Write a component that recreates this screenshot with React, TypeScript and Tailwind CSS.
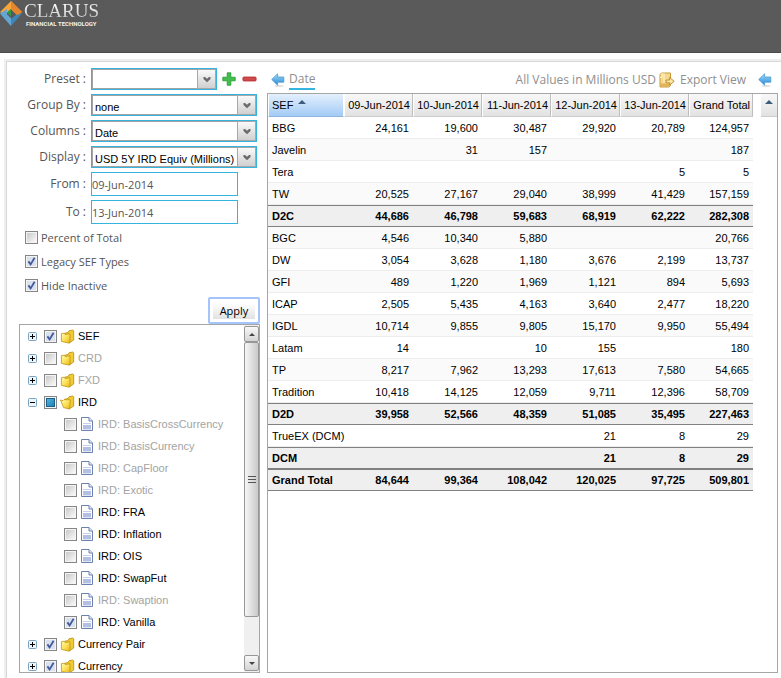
import { useState } from "react";
import type { ReactNode } from "react";

const UI = "font-['Liberation_Sans',Arial,sans-serif]";

function CheckBox({ id, label, on, partial }: { id: string; label?: string; on?: boolean; partial?: boolean }) {
  const [checked, setChecked] = useState(!!on);
  return (
    <span className="grid size-[13px] shrink-0">
      <input
        id={id}
        type="checkbox"
        aria-label={label}
        checked={checked}
        onChange={() => setChecked(!checked)}
        className="col-start-1 row-start-1 size-[13px] appearance-none border border-[#868686] bg-linear-to-br from-[#c4c4c4] to-[#ffffff] shadow-[inset_0_0_0_1px_#f4f4f4]"
      />
      {checked && (
        <svg viewBox="0 0 13 13" className="pointer-events-none col-start-1 row-start-1 size-[13px]" aria-hidden="true">
          <rect x="2" y="2" width="9" height="9" fill="#d9e0ee" />
          <path d="M3.4 6.4 5.6 9.4 9.6 2.8" fill="none" stroke="#43599a" strokeWidth="1.8" />
        </svg>
      )}
      {partial && !checked && (
        <svg viewBox="0 0 13 13" className="pointer-events-none col-start-1 row-start-1 size-[13px]" aria-hidden="true">
          <defs>
            <linearGradient id="partialFill" x1="0" y1="0" x2="1" y2="1">
              <stop offset="0" stopColor="#56b6e2" />
              <stop offset="1" stopColor="#1b7fb4" />
            </linearGradient>
          </defs>
          <rect x="2.5" y="2.5" width="8" height="8" fill="url(#partialFill)" stroke="#1c5f88" />
        </svg>
      )}
    </span>
  );
}

function Combo({ id, value, className }: { id: string; value: string; className: string }) {
  return (
    <div className={`grid h-[22px] border border-[#35b4e0] ${className}`}>
      <select
        id={id}
        defaultValue={value}
        className={`col-start-1 row-start-1 h-5 w-full appearance-none border border-[#a3a3a3] bg-white pt-[3px] pl-0.5 text-[11px] leading-[14px] text-black ${UI}`}
      >
        <option>{value}</option>
      </select>
      <span className="pointer-events-none col-start-1 row-start-1 flex h-5 w-[19px] items-center justify-center justify-self-end border border-[#a8a8a8] bg-linear-to-b from-[#fafafa] to-[#d0d0d0]">
        <svg viewBox="0 0 8 7" className="h-[7px] w-2" aria-hidden="true">
          <path d="M0.5 1 H2 L4 2.8 L6 1 H7.5 V3 L4 6.2 L0.5 3Z" fill="#6b6b6b" />
        </svg>
      </span>
    </div>
  );
}

function Field({ id, label, children }: { id: string; label: string; children: ReactNode }) {
  return (
    <div className="flex items-center">
      <label htmlFor={id} className="w-[72px] shrink-0 pr-[5px] text-right text-xs">
        {label} :
      </label>
      {children}
    </div>
  );
}

function Option({ id, label, on }: { id: string; label: string; on?: boolean }) {
  return (
    <div className="flex h-6 items-center gap-[3px] pl-1.5">
      <CheckBox id={id} on={on} />
      <label htmlFor={id} className="pt-0.5 text-[11px] leading-4">
        {label}
      </label>
    </div>
  );
}

function Arrow() {
  return (
    <svg viewBox="0 0 14 16" className="h-4 w-3.5" aria-hidden="true">
      <defs>
        <linearGradient id="arrowFill" x1="0" y1="0" x2="0" y2="1">
          <stop offset="0" stopColor="#a5dcf8" />
          <stop offset="0.5" stopColor="#62b2e8" />
          <stop offset="1" stopColor="#2a86cf" />
        </linearGradient>
      </defs>
      <ellipse cx="8" cy="14" rx="4.5" ry="1.1" fill="#000" opacity="0.12" />
      <path d="M0.7 7.5 6.6 1.8V5H12.8V10.2H6.6V13.2Z" fill="url(#arrowFill)" stroke="#4b9bd6" strokeWidth="0.8" strokeLinejoin="round" />
    </svg>
  );
}

function Folder({ open }: { open?: boolean }) {
  return (
    <svg viewBox="0 0 15 15" className="h-[15px] w-[15px] shrink-0" aria-hidden="true">
      <defs>
        <linearGradient id="folderFill" x1="0" y1="0" x2="1" y2="1">
          <stop offset="0" stopColor="#fffbb8" />
          <stop offset="0.5" stopColor="#fbe25a" />
          <stop offset="1" stopColor="#e9b418" />
        </linearGradient>
      </defs>
      <path d="M4.5 4.2 8 3.6 9 1.8 12.6 1 13.7 1.8V11L9 14Z" fill="#f0cb35" stroke="#b98d10" strokeWidth="0.8" strokeLinejoin="round" />
      {open ? (
        <path d="M.5 5 3 5.6 4 4.6 10.4 4.8 9.6 14 3.6 12.6Z" fill="url(#folderFill)" stroke="#c0930f" strokeWidth="0.8" strokeLinejoin="round" />
      ) : (
        <path d="M1.4 4.6 3.8 4.2 5 5.4 10 4.8V13.8L8.6 14 1.4 12.4Z" fill="url(#folderFill)" stroke="#c0930f" strokeWidth="0.8" strokeLinejoin="round" />
      )}
    </svg>
  );
}

function FileIcon() {
  return (
    <svg viewBox="0 0 12 14" className="h-3.5 w-3 shrink-0" aria-hidden="true">
      <path d="M.5 .5H8L11.5 4V13.5H.5Z" fill="#fff" stroke="#6c80b3" />
      <path d="M8 .5V4H11.5" fill="#dfe5f4" stroke="#6c80b3" />
      <path d="M2 6.5H10" stroke="#c5cfe9" />
      <rect x="2" y="8" width="8" height="4.4" fill="#b4c0e2" />
    </svg>
  );
}

type Node = { name: string; on?: boolean; dim?: boolean; partial?: boolean; kids?: boolean; open?: boolean };
const nodes: Node[] = [
  { name: "SEF", on: true, kids: true },
  { name: "CRD", dim: true, kids: true },
  { name: "FXD", dim: true, kids: true },
  { name: "IRD", partial: true, kids: true, open: true },
  { name: "IRD: BasisCrossCurrency", dim: true },
  { name: "IRD: BasisCurrency", dim: true },
  { name: "IRD: CapFloor", dim: true },
  { name: "IRD: Exotic", dim: true },
  { name: "IRD: FRA" },
  { name: "IRD: Inflation" },
  { name: "IRD: OIS" },
  { name: "IRD: SwapFut" },
  { name: "IRD: Swaption", dim: true },
  { name: "IRD: Vanilla", on: true },
  { name: "Currency Pair", on: true, kids: true },
  { name: "Currency", on: true, kids: true },
];

function TreeRow({ node, id }: { node: Node; id: string }) {
  return (
    <li className={`flex h-[22px] items-center ${node.kids ? "pl-2" : "pl-11"}`}>
      {node.kids && (
        <button type="button" aria-label={`${node.open ? "Collapse" : "Expand"} ${node.name}`} className="mr-[7px] shrink-0">
          <svg viewBox="0 0 9 9" className="size-[9px]" aria-hidden="true">
            <rect x=".5" y=".5" width="8" height="8" rx="1" fill="#eef6fb" stroke="#7ba3bf" />
            <path d={node.open ? "M2 4.5H7" : "M2 4.5H7M4.5 2V7"} stroke="#000" />
          </svg>
        </button>
      )}
      <CheckBox id={id} on={node.on} partial={node.partial} />
      <span className={node.kids ? "mx-[3px]" : "ml-1 mr-[5px]"}>{node.kids ? <Folder open={node.open} /> : <FileIcon />}</span>
      <label htmlFor={id} className={node.dim ? "text-[#a3a3a3]" : "text-black"}>
        {node.name}
      </label>
    </li>
  );
}

const dates = ["09-Jun-2014", "10-Jun-2014", "11-Jun-2014", "12-Jun-2014", "13-Jun-2014", "Grand Total"];
const rows: string[][] = [
  ["BBG", "24,161", "19,600", "30,487", "29,920", "20,789", "124,957"],
  ["Javelin", "", "31", "157", "", "", "187"],
  ["Tera", "", "", "", "", "5", "5"],
  ["TW", "20,525", "27,167", "29,040", "38,999", "41,429", "157,159"],
  ["D2C", "44,686", "46,798", "59,683", "68,919", "62,222", "282,308"],
  ["BGC", "4,546", "10,340", "5,880", "", "", "20,766"],
  ["DW", "3,054", "3,628", "1,180", "3,676", "2,199", "13,737"],
  ["GFI", "489", "1,220", "1,969", "1,121", "894", "5,693"],
  ["ICAP", "2,505", "5,435", "4,163", "3,640", "2,477", "18,220"],
  ["IGDL", "10,714", "9,855", "9,805", "15,170", "9,950", "55,494"],
  ["Latam", "14", "", "10", "155", "", "180"],
  ["TP", "8,217", "7,962", "13,293", "17,613", "7,580", "54,665"],
  ["Tradition", "10,418", "14,125", "12,059", "9,711", "12,396", "58,709"],
  ["D2D", "39,958", "52,566", "48,359", "51,085", "35,495", "227,463"],
  ["TrueEX (DCM)", "", "", "", "21", "8", "29"],
  ["DCM", "", "", "", "21", "8", "29"],
  ["Grand Total", "84,644", "99,364", "108,042", "120,025", "97,725", "509,801"],
];
const totals = ["D2C", "D2D", "DCM", "Grand Total"];

function ResultTable() {
  return (
    <table className="w-[485px] table-fixed border-separate border-spacing-0 text-black">
      <colgroup>
        <col className="w-[76px]" />
        <col className="w-[69px]" />
        <col className="w-[69px]" />
        <col className="w-[69px]" />
        <col className="w-[69px]" />
        <col className="w-[69px]" />
        <col className="w-16" />
      </colgroup>
      <thead>
        <tr className="h-[23px]">
          <th scope="col" aria-sort="ascending" className="border-r border-b border-l border-white border-b-[#8fb6de] bg-linear-to-b from-[#e4f0fd] to-[#a3cbf5] bg-clip-padding p-0 pl-[3px] text-left font-normal">
            <button type="button" className="flex items-start gap-[5px]">
              SEF
              <svg viewBox="0 0 8 4" className="mt-0.5 h-1 w-2" aria-hidden="true">
                <path d="M0 4 4 0 8 4Z" fill="#3f5c7c" />
              </svg>
            </button>
          </th>
          {dates.map((d) => (
            <th key={d} scope="col" className="border-r border-b border-l border-r-[#bdbdbd] border-b-[#cccccc] border-l-white bg-linear-to-b from-[#f8f8f8] to-[#e2e2e2] p-0 pr-0.5 text-right font-normal whitespace-nowrap">
              {d}
            </th>
          ))}
        </tr>
      </thead>
      <tbody>
        {rows.map((r, i) => {
          const total = totals.includes(r[0]);
          const cell = total ? "border-y border-[#808080]" : "border-b border-[#ededed]";
          return (
            <tr key={r[0]} className={`h-[22px] ${total ? "bg-[#efefef] font-bold" : i % 2 ? "bg-[#fafafa]" : "bg-white"}`}>
              <th scope="row" className={`p-0 pl-1 text-left whitespace-nowrap ${total ? "" : "font-normal"} ${cell}`}>
                {r[0]}
              </th>
              {r.slice(1).map((v, j) => (
                <td key={j} className={`p-0 pr-1 text-right ${cell}`}>
                  {v}
                </td>
              ))}
            </tr>
          );
        })}
      </tbody>
    </table>
  );
}

export default function App() {
  return (
    <div className="flex h-screen flex-col overflow-hidden bg-white font-['Open_Sans',sans-serif] text-[#555555]">
      <header className="flex h-[53px] shrink-0 items-start gap-0.5 border-b border-[#4c4c4c] bg-[#5a5a5a] pt-px">
        <svg viewBox="0 0 22 25" className="h-[25px] w-[22px]" aria-hidden="true">
          <path d="M11 0 22 11 17.5 14.5 11 8 4.5 14.5 0 11Z" fill="#f6a53a" />
          <path d="M11 0 22 11 17.5 14.5 11 8Z" fill="#e8842c" />
          <path d="M0 12.5 7 9.5V13.5L11.5 17.5 16 14 22 12.5 11 25Z" fill="#3f86ba" />
          <path d="M0 12.5 7 8V13.5L11 17.5V25Z" fill="#66a5cf" />
          <path d="M7 11.5 11 8V15.5Z" fill="#2e9a47" />
        </svg>
        <div className="flex flex-col gap-px pt-0.5">
          <span className="bg-linear-to-b from-white to-[#c4c4c4] bg-clip-text font-['Liberation_Serif',serif] text-[19px] leading-4 font-medium text-transparent">CLARUS</span>
          <span className="pl-0.5 font-['Roboto',sans-serif] text-[6px] leading-[7px] font-bold whitespace-nowrap text-[#f0f0f0]">FINANCIAL TECHNOLOGY</span>
        </div>
      </header>

      <main className="mt-1.5 ml-1 flex min-h-0 flex-1 gap-[7px] border-t-2 border-l-2 border-[#efefef] pt-px pr-[3px] pb-[5px] pl-[13px] shadow-[inset_1px_1px_0_#d8d8d8]">
        <form className="flex w-[241px] shrink-0 flex-col pt-1.5" onSubmit={(e) => e.preventDefault()}>
          <div className="flex flex-col gap-1">
            <Field id="preset" label="Preset">
              <Combo id="preset" value="" className="w-[126px]" />
              <button type="button" aria-label="Add preset" className="ml-[5px]">
                <svg viewBox="0 0 14 14" className="h-3.5 w-3.5" aria-hidden="true">
                  <path d="M5.2 .8H8.8V5.2H13.2V8.8H8.8V13.2H5.2V8.8H.8V5.2H5.2Z" fill="#43bd4c" stroke="#1f9a2e" strokeWidth=".8" strokeLinejoin="round" />
                </svg>
              </button>
              <button type="button" aria-label="Remove preset" className="ml-1.5">
                <svg viewBox="0 0 15 14" className="h-3.5 w-[15px]" aria-hidden="true">
                  <rect x=".9" y="5" width="13.2" height="4" rx="1" fill="#cf4a4a" stroke="#b32c33" strokeWidth=".8" />
                </svg>
              </button>
            </Field>
            <Field id="group" label="Group By">
              <Combo id="group" value="none" className="w-[166px]" />
            </Field>
            <Field id="columns" label="Columns">
              <Combo id="columns" value="Date" className="w-[166px]" />
            </Field>
            <Field id="display" label="Display">
              <Combo id="display" value="USD 5Y IRD Equiv (Millions)" className="w-[166px]" />
            </Field>
            <Field id="from" label="From">
              <input id="from" type="text" defaultValue="09-Jun-2014" className="h-6 w-[147px] border border-[#35b4e0] text-[11px]" />
            </Field>
            <Field id="to" label="To">
              <input id="to" type="text" defaultValue="13-Jun-2014" className="h-6 w-[147px] border border-[#35b4e0] text-[11px]" />
            </Field>
          </div>
          <div className="flex flex-col pt-px">
            <Option id="percent" label="Percent of Total" />
            <Option id="legacy" label="Legacy SEF Types" on />
            <Option id="inactive" label="Hide Inactive" on />
          </div>
          <button type="submit" className="flex h-[27px] w-[52px] shrink-0 items-center justify-center self-end rounded-[2px] border-2 border-[#a5c4fb] bg-white text-[11px] text-black">
            <span className="bg-linear-to-b from-white to-[#e2e2e2] px-[7px] leading-4">Apply</span>
          </button>
          <div className={`flex min-h-0 flex-1 border border-[#a6a6a6] text-[11px] leading-[14px] ${UI}`}>
            <ul className="min-w-0 flex-1 overflow-hidden">
              {nodes.map((n, i) => (
                <TreeRow key={n.name} node={n} id={`node-${i}`} />
              ))}
            </ul>
            <div className="flex w-[15px] flex-col bg-[#f0f0f0] py-px">
              <button type="button" aria-label="Scroll up" className="flex h-4 items-center justify-center rounded-[2px] border border-[#979797] bg-linear-to-b from-[#f8f8f8] to-[#d4d4d4]">
                <svg viewBox="0 0 6 3" className="h-[3px] w-1.5" aria-hidden="true">
                  <path d="M0 3 3 0 6 3Z" fill="#444" />
                </svg>
              </button>
              <div className="flex grow-[7] items-center justify-center rounded-[2px] border border-[#979797] bg-linear-to-r from-[#f7f7f7] to-[#c9c9c9]">
                <svg viewBox="0 0 8 8" className="size-2" aria-hidden="true">
                  <path d="M0 .5H8M0 3.5H8M0 6.5H8" stroke="#555" />
                </svg>
              </div>
              <div className="grow" />
              <button type="button" aria-label="Scroll down" className="flex h-4 items-center justify-center rounded-[2px] border border-[#979797] bg-linear-to-b from-[#f8f8f8] to-[#d4d4d4]">
                <svg viewBox="0 0 6 3" className="h-[3px] w-1.5" aria-hidden="true">
                  <path d="M0 0 3 3 6 0Z" fill="#444" />
                </svg>
              </button>
            </div>
          </div>
        </form>

        <section className="flex min-w-0 flex-1 flex-col">
          <div className="flex h-[31px] shrink-0 items-center pt-1 pr-1.5 pl-1 text-xs whitespace-nowrap text-[#8f8f8f]">
            <button type="button" aria-label="Move date left">
              <Arrow />
            </button>
            <a href="#date" className="ml-1 border-b-2 border-[#35b4e0] leading-[18px]">
              Date
            </a>
            <span className="ml-auto">All Values in Millions USD</span>
            <button type="button" className="ml-[3px] flex items-center gap-[5px]">
              <svg viewBox="0 0 16 16" className="size-4" aria-hidden="true">
                <path d="M1 2.5 2.5 1H11.5V13.5L10 15H1Z" fill="#f6d88c" stroke="#c99a3a" />
                <path d="M1.5 11.5H10.5V14.5H1.5Z" fill="#e2b35a" />
                <path d="M3 1V5.5H1M5 1V11" stroke="#fff3cb" fill="none" />
                <path d="M7 8H10.6V5.4L15.2 9.3 10.6 13V10.8H7Z" fill="#fbe6a6" stroke="#b98728" strokeWidth=".9" strokeLinejoin="round" />
              </svg>
              Export View
            </button>
            <button type="button" aria-label="Move date right" className="ml-3">
              <Arrow />
            </button>
          </div>
          <div className={`flex min-h-0 flex-1 items-start justify-between border border-[#a6a6a6] text-[11px] leading-[14px] ${UI}`}>
            <ResultTable />
            <button type="button" aria-label="Sort" className="flex h-[23px] w-4 justify-center border-b border-[#cccccc] bg-linear-to-b from-[#f8f8f8] to-[#e2e2e2] pt-1.5">
              <svg viewBox="0 0 8 4" className="h-1 w-2" aria-hidden="true">
                <path d="M0 4 4 0 8 4Z" fill="#3f5c7c" />
              </svg>
            </button>
          </div>
        </section>
      </main>
    </div>
  );
}
